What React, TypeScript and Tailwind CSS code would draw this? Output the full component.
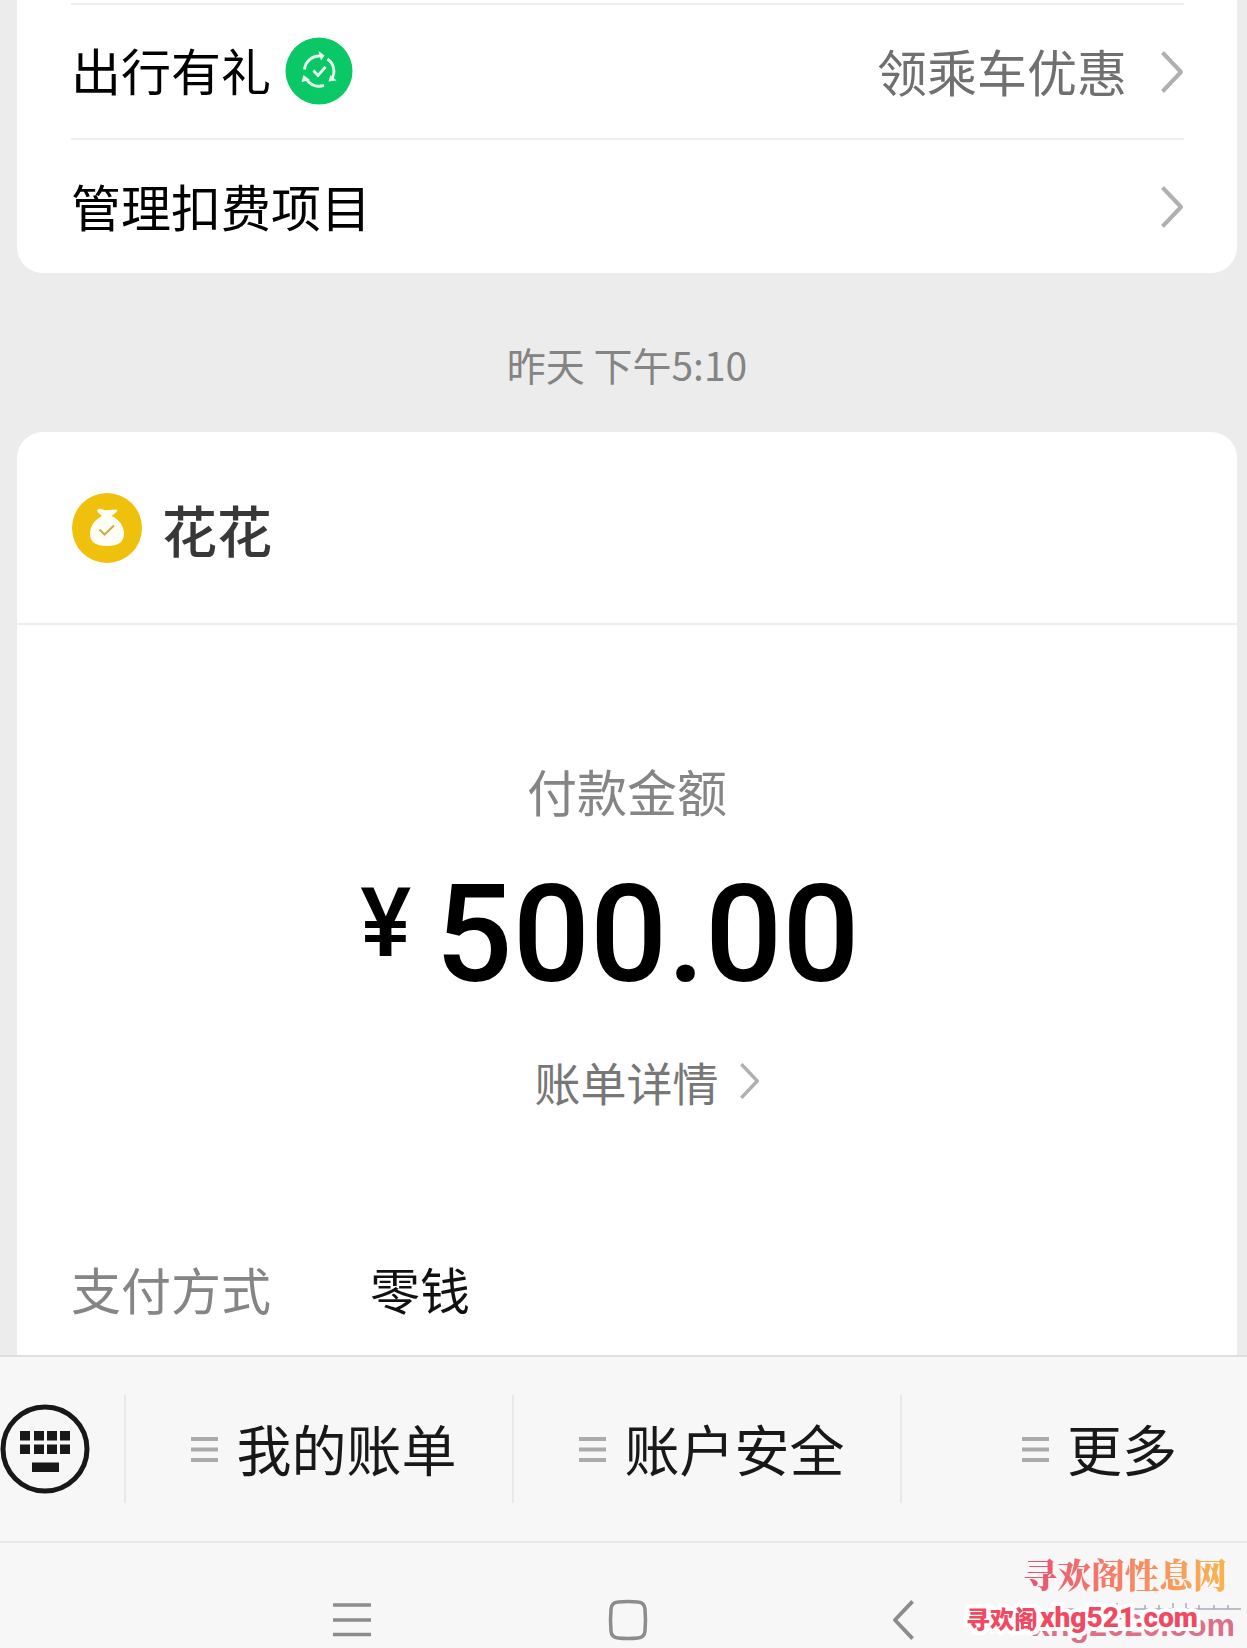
import React from 'react';

const Chevron = ({ className }: { className: string }) => (
  <svg viewBox="0 0 24 44" fill="none" stroke="currentColor" strokeWidth="4" className={className}>
    <path d="M2.5 2.5 L21 22 L2.5 41.5" strokeLinejoin="round" />
  </svg>
);

const TripIcon = () => (
  <svg viewBox="0 0 68 68" className="w-[68px] h-[68px]">
    <circle cx="34" cy="34" r="33.5" fill="#0bc866" />
    <g fill="none" stroke="#e6fff0" strokeWidth="2.8">
      <path d="M19.5 32.5 A15 15 0 0 1 35 19" />
      <path d="M42.5 22 A15 15 0 0 1 46.8 42" />
      <path d="M39 48.4 A15 15 0 0 1 21.5 42.5" />
      <path d="M28.5 33.5 L33 38.5 L40.5 30" />
    </g>
    <g fill="#e6fff0">
      <path d="M33.5 14 L39.5 18.5 L36 23.5 Z" />
      <path d="M51.5 43.5 L43.5 44.5 L45.5 38 Z" />
      <path d="M16.5 45 L18.5 38 L25 43 Z" />
    </g>
  </svg>
);

const MoneyBag = () => (
  <svg viewBox="0 0 70 70" className="w-[70px] h-[70px]">
    <circle cx="35" cy="35" r="35" fill="#efc00c" />
    <path
      d="M25 17.5 C26 15.5 28 15.5 29.5 16 L33 17.2 L44 16.5 C46 16.5 45.5 18.5 44 19.5 L39.5 23 C47 26 52 33 52 40.5 C52 49 46.5 53 35 53 C23.5 53 18 49 18 41 C18 33 23 26.5 30 23 L26 19.5 Z"
      fill="#fffef4"
    />
    <path d="M27.5 36.5 L32.5 41.5 L42 32.5" fill="none" stroke="#c9ad3c" strokeWidth="2" />
  </svg>
);

const KeyboardIcon = () => (
  <svg viewBox="0 0 90 90" className="w-[90px] h-[90px]">
    <circle cx="45" cy="45" r="42" fill="none" stroke="#181818" strokeWidth="5" />
    <g fill="#181818">
      {[20, 34, 47, 60].map((x) => (
        <React.Fragment key={x}>
          <rect x={x} y="27" width="10" height="9.5" />
          <rect x={x} y="40.5" width="10" height="9.5" />
        </React.Fragment>
      ))}
      <rect x="32" y="58.5" width="27" height="9.5" />
    </g>
  </svg>
);

const MenuLines = () => (
  <svg viewBox="0 0 27 27" className="w-[27px] h-[27px]" stroke="#ababab" strokeWidth="4">
    <path d="M0 3 H27 M0 13.5 H27 M0 24 H27" />
  </svg>
);

const MenuItem = ({ label, className }: { label: string; className: string }) => (
  <button className={`flex items-center justify-center gap-[18px] h-[108px] border-l-2 border-[#e9e9e9] text-[55px] leading-[64px] text-[#181818] ${className}`}>
    <MenuLines />
    <span className="pb-[5px]">{label}</span>
  </button>
);

const Watermark = () => (
  <div className="absolute right-0 bottom-0 w-[280px] h-[100px] pointer-events-none">
    <div
      className="absolute right-[20px] top-[4px] text-[34px] leading-[44px] font-black whitespace-nowrap text-transparent bg-clip-text bg-linear-to-r from-[#ec4a74] to-[#f9b44d] font-['Noto_Serif_CJK_SC','Noto_Sans_CJK_SC',serif]"
    >
      寻欢阁性息网
    </div>
    <svg viewBox="0 0 190 8" className="absolute right-[6px] top-[55px] w-[190px] h-[8px]" stroke="#a9abb5" strokeWidth="1.5">
      <path d="M0 6 H190 M10 1 V6 M38 2 V6 M66 0 V6 M94 2 V6 M108 2 V6 M122 0 V6 M135 0 V6 M148 2 V6 M163 2 V6 M177 2 V6" />
    </svg>
    <div className="absolute right-[12px] top-[58px] text-[32px] leading-[38px] font-bold text-[#dc7088] font-['Liberation_Sans',sans-serif]">
      xhg2020.com
    </div>
    <div className="absolute right-[49px] top-[50px] flex items-center gap-[2px] whitespace-nowrap font-black text-[#f04a63] [-webkit-text-stroke:8px_white] [paint-order:stroke_fill] leading-[40px]">
      <span className="text-[24px]">寻欢阁</span>
      <span className="text-[28px] font-['Roboto',sans-serif]">xhg521.com</span>
    </div>
  </div>
);

export default function App() {
  return (
    <div className="relative min-h-screen flex flex-col bg-[#ececec] overflow-hidden font-['Noto_Sans_CJK_SC',sans-serif]">
      <main className="flex-1 flex flex-col pl-[17px] pr-[10px]">
        <section className="bg-white rounded-b-[26px] pl-[54px] pr-[53px] pt-[3px]">
          <a href="#" className="flex items-center justify-between h-[135px] border-t-2 border-[#eeeeee]">
            <div className="flex items-center gap-[14px] pb-[2px]">
              <span className="pb-[4px] text-[50px] leading-[60px] text-black">出行有礼</span>
              <TripIcon />
            </div>
            <div className="flex items-center gap-[33px]">
              <span className="pb-[4px] text-[50px] leading-[60px] text-[#707070]">领乘车优惠</span>
              <Chevron className="w-[24px] h-[44px] text-[#b0b0b0]" />
            </div>
          </a>
          <a href="#" className="flex items-center justify-between h-[135px] border-t-2 border-[#eeeeee]">
            <span className="pb-[4px] text-[50px] leading-[60px] text-black">管理扣费项目</span>
            <Chevron className="w-[24px] h-[44px] text-[#b0b0b0]" />
          </a>
        </section>

        <time className="pt-[66px] pb-[42px] text-center text-[39px] leading-[51px] text-[#848484]">昨天 下午5:10</time>

        <section className="flex-1 bg-white rounded-t-[26px]">
          <header className="flex items-center gap-[20px] h-[193px] px-[55px] border-b-2 border-[#eeeeee]">
            <MoneyBag />
            <h2 className="text-[55px] leading-[64px] font-medium text-[#383838]">花花</h2>
          </header>

          <div className="flex flex-col items-center pt-[135px]">
            <p className="text-[50px] leading-[60px] text-[#858585]">付款金额</p>
            <div className="flex items-start gap-[24px] mt-[47px] mr-[34px] font-medium text-black font-['Roboto',sans-serif]">
              <span className="text-[96px] leading-[112px]">¥</span>
              <span className="text-[136px] leading-[136px]">500.00</span>
            </div>
            <a href="#" className="flex items-center gap-[20px] mt-[48px] ml-[40px] text-[46px] leading-[60px] text-[#777777]">
              账单详情
              <Chevron className="w-[21px] h-[38px] text-[#b0b0b0]" />
            </a>
          </div>

          <dl className="flex mt-[147px] px-[54px] pb-[34px] text-[50px] leading-[60px]">
            <dt className="w-[299px] text-[#858585]">支付方式</dt>
            <dd className="text-[#111111]">零钱</dd>
          </dl>
        </section>
      </main>

      <footer className="bg-[#f7f7f7] border-t-2 border-[#dfdfdf]">
        <div className="grid grid-cols-[124px_388px_388px_1fr] items-center h-[184px]">
          <button aria-label="键盘" className="w-[90px]">
            <KeyboardIcon />
          </button>
          <MenuItem label="我的账单" className="pl-[10px]" />
          <MenuItem label="账户安全" className="pl-[10px]" />
          <MenuItem label="更多" className="pl-[50px]" />
        </div>
        <nav className="flex items-start justify-center gap-[236px] h-[107px] pt-[56px] pl-[8px] border-t-2 border-[#e8e8e8] text-[#8c8c8c]">
          <button aria-label="菜单" className="flex justify-center w-[40px]">
            <svg viewBox="0 0 38 42" className="w-[38px] h-[42px]" stroke="currentColor" strokeWidth="3.5">
              <path d="M0 6 H38 M0 21 H38 M0 35.5 H38" />
            </svg>
          </button>
          <button aria-label="主页" className="flex justify-center w-[40px]">
            <svg viewBox="0 0 40 42" className="w-[40px] h-[42px]" fill="none" stroke="currentColor" strokeWidth="3.5">
              <path d="M10 3 Q20 2 30 3 Q36.5 3.5 37 10 Q38 21 37 32 Q36.5 38.5 30 39 Q20 40 10 39 Q3.5 38.5 3 32 Q2 21 3 10 Q3.5 3.5 10 3 Z" />
            </svg>
          </button>
          <button aria-label="返回" className="flex justify-center w-[40px]">
            <Chevron className="w-[23px] h-[42px] rotate-180" />
          </button>
        </nav>
      </footer>

      <Watermark />
    </div>
  );
}
